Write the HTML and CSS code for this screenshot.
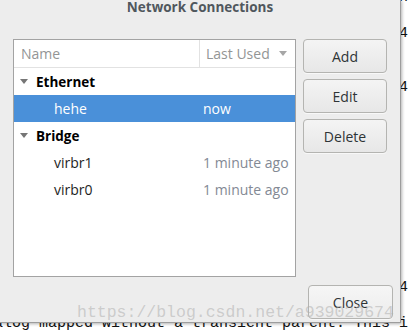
FILE: index.html
```html
<!doctype html>
<html lang="en">
  <head>
    <meta charset="UTF-8" />
    <meta name="viewport" content="width=device-width, initial-scale=1.0" />
    <title>Network Connections</title>
    <link rel="stylesheet" href="styles.css">
  </head>
  <body>
    <!-- terminal behind the dialog: only its right column and last line show -->
    <div class="terminal">
      <div class="line edge">n</div>
      <div class="line"></div>
      <div class="line edge">4</div>
      <div class="line"></div>
      <div class="line"></div>
      <div class="line edge">4</div>
      <div class="line"></div>
      <div class="line"></div>
      <div class="line"></div>
      <div class="line"></div>
      <div class="line"></div>
      <div class="line"></div>
      <div class="line"></div>
      <div class="line"></div>
      <div class="line"></div>
      <div class="line"></div>
      <div class="line edge">4</div>
      <div class="line"></div>
      <div class="line">Dialog mapped without a transient parent. This i</div>
    </div>

    <div class="dialog">
      <div class="titlebar">Network Connections</div>

      <div class="dialog-body">
        <div class="tree">
          <div class="tree-header">
            <div class="name">Name</div>
            <div class="used">Last Used <span class="sort-arrow"></span></div>
          </div>

          <div class="row group">
            <div class="name"><span class="expander"></span>Ethernet</div>
            <div class="used"></div>
          </div>
          <div class="row selected">
            <div class="name">hehe</div>
            <div class="used">now</div>
          </div>
          <div class="row group">
            <div class="name"><span class="expander"></span>Bridge</div>
            <div class="used"></div>
          </div>
          <div class="row">
            <div class="name">virbr1</div>
            <div class="used dim">1 minute ago</div>
          </div>
          <div class="row">
            <div class="name">virbr0</div>
            <div class="used dim">1 minute ago</div>
          </div>
        </div>

        <div class="actions">
          <button type="button">Add</button>
          <button type="button">Edit</button>
          <button type="button">Delete</button>
        </div>
      </div>

      <div class="footer">
        <button type="button" class="close">Close</button>
      </div>
    </div>

    <div class="watermark">https://blog.csdn.net/a939029674</div>
  </body>
</html>
```

FILE: styles.css
```css
html,
body {
  margin: 0;
  height: 100%;
  overflow: hidden;
  background: #fff;
}
.terminal {
  margin: -11px 0 0 -24px;
  font-family: "Liberation Mono", monospace;
  font-size: 15px;
  color: #111;
}
.line {
  height: 18.1px;
  line-height: 18.1px;
  white-space: pre;
}
.edge {
  padding-left: 47ch;
}
.dialog {
  position: absolute;
  left: 0;
  top: 0;
  width: 400px;
  height: 322px;
  background: #ededed;
  border-right: 1px solid #9d9d9d;
  border-bottom: 1px solid #9d9d9d;
  box-shadow: 1px 1px 3px rgba(0, 0, 0, 0.3);
  font-family: "Open Sans", sans-serif;
  font-size: 14px;
  color: #2e3436;
}
.titlebar {
  height: 15px;
  line-height: 15px;
  text-align: center;
  font-size: 13.5px;
  font-weight: bold;
  color: #50575d;
}
.dialog-body {
  display: flex;
  gap: 7px;
  padding: 24px 13px 0 13px;
}
.tree {
  width: 283px;
  height: 238px;
  box-sizing: border-box;
  border: 1px solid #a3a3a3;
  background: #fff;
}
.tree-header,
.row {
  display: grid;
  grid-template-columns: 185px 1fr;
  align-items: center;
}
.tree-header {
  height: 27px;
  border-bottom: 1px solid #e2e2e2;
  color: #939595;
}
.tree-header .name {
  padding-left: 7px;
}
.tree-header .used {
  height: 27px;
  display: flex;
  align-items: center;
  padding-left: 6px;
  border-left: 1px solid #e2e2e2;
}
.sort-arrow {
  margin-left: auto;
  margin-right: 8px;
  width: 0;
  height: 0;
  border-left: 4.5px solid transparent;
  border-right: 4.5px solid transparent;
  border-top: 5px solid #a6a6a6;
}
.row {
  height: 27px;
  color: #1e1e1e;
}
.row .name {
  padding-left: 40px;
}
.row .used {
  padding-left: 4px;
}
.row.group .name {
  display: flex;
  align-items: center;
  gap: 8px;
  padding-left: 6px;
  font-weight: bold;
  font-size: 13.5px;
  color: #000;
}
.expander {
  width: 0;
  height: 0;
  border-left: 4.5px solid transparent;
  border-right: 4.5px solid transparent;
  border-top: 5px solid #767676;
}
.row.selected {
  background: #4a90d9;
  color: #fff;
}
.dim {
  color: #838994;
}
.actions {
  display: flex;
  flex-direction: column;
  gap: 6px;
}
button {
  width: 84px;
  height: 34px;
  padding: 0;
  border: 1px solid #b4b4b1;
  border-radius: 4px;
  background: linear-gradient(#f4f4f4, #e7e7e7);
  box-shadow: 0 1px 0 rgba(255, 255, 255, 0.6);
  font-family: "Open Sans", sans-serif;
  font-size: 14px;
  color: #2e3436;
}
.footer {
  display: flex;
  justify-content: flex-end;
  padding: 8px 7px 0 0;
}
.close {
  width: 85px;
  background: linear-gradient(#f6f6f6, #ececec);
}
.watermark {
  position: absolute;
  left: 77px;
  top: 305px;
  font-family: "Liberation Mono", monospace;
  font-size: 16.5px;
  line-height: 16.5px;
  color: rgba(175, 175, 175, 0.55);
  white-space: nowrap;
}
```
